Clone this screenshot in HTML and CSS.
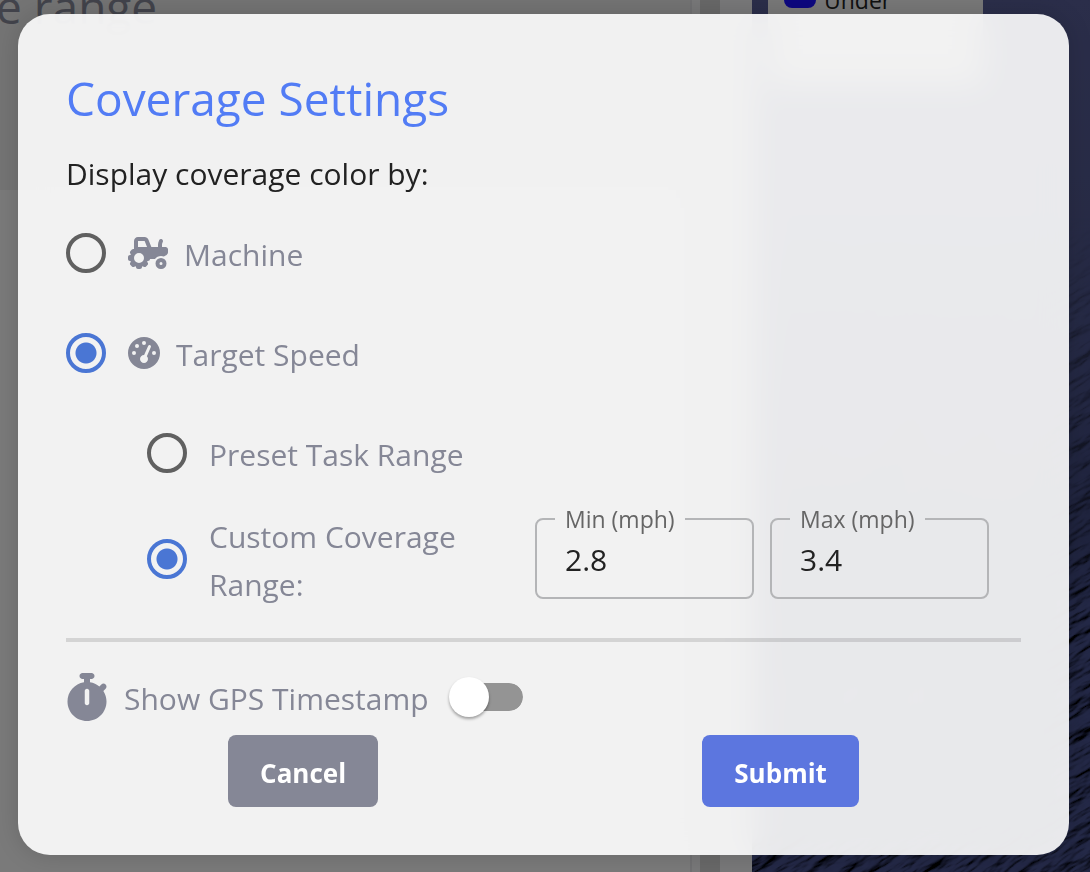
FILE: index.html
```
<!DOCTYPE html>
<html lang="en">
<head>
    <meta charset="UTF-8">
    <meta name="viewport" content="width=device-width, initial-scale=1.0">
    <title>Coverage Settings</title>
    <link rel="stylesheet" href="styles.css">
</head>
<body>
    <!-- Dashboard behind the dialog -->
    <div class="dashboard">
        <div class="panel">
            <div class="panel-card">e range</div>
        </div>
        <div class="scrollbar"></div>
        <div class="map">
            <svg class="terrain" viewBox="0 0 338 872" preserveAspectRatio="xMaxYMin slice" aria-hidden="true">
                <defs>
                    <filter id="ridges" x="0" y="0" width="100%" height="100%">
                        <feTurbulence type="fractalNoise" baseFrequency="0.02 0.08" numOctaves="4" seed="7"/>
                        <feDiffuseLighting surfaceScale="9" lighting-color="#4a5390">
                            <feDistantLight azimuth="250" elevation="50"/>
                        </feDiffuseLighting>
                    </filter>
                    <linearGradient id="fade" x1="0" y1="0" x2="0" y2="1">
                        <stop offset="0.25" stop-color="#000"/>
                        <stop offset="0.4" stop-color="#555"/>
                        <stop offset="0.62" stop-color="#777"/>
                        <stop offset="0.7" stop-color="#fff"/>
                    </linearGradient>
                    <mask id="lower">
                        <rect width="338" height="872" fill="url(#fade)"/>
                    </mask>
                </defs>
                <g mask="url(#lower)">
                    <rect x="-500" y="-200" width="1400" height="1400" transform="rotate(-30 169 436)" filter="url(#ridges)"/>
                </g>
            </svg>
            <div class="map-legend"><span class="swatch"></span>Under</div>
        </div>
    </div>

    <!-- Dialog -->
    <div class="backdrop">
        <form class="dialog">
            <h1>Coverage Settings</h1>
            <p class="prompt">Display coverage color by:</p>

            <div class="option">
                <input type="radio" name="colorBy" id="machine">
                <label for="machine">
                    <svg class="icon" width="40" height="32" viewBox="0 0 640 512" aria-hidden="true"><path d="M96 64c0-35.300 28.700-64 64-64H266.300c26.200 0 49.700 15.900 59.400 40.200L373.700 160H480V126.200c0-24.800 5.800-49.300 16.900-71.600l2.500-5c7.900-15.800 27.100-22.200 42.900-14.300s22.200 27.100 14.300 42.900l-2.500 5c-6.700 13.300-10.100 28-10.100 42.900V160h56c22.100 0 40 17.900 40 40v45.400c0 16.500-8.500 31.900-22.600 40.700l-43.300 27.100c-14.200-5.900-29.800-9.200-46.100-9.200c-39.300 0-74.100 18.900-96 48H352c0 17.700-14.300 32-32 32h-8.200c-1.700 4.800-3.700 9.500-5.800 14.100l5.800 5.800c12.500 12.500 12.500 32.800 0 45.300l-22.600 22.600c-12.500 12.500-32.800 12.500-45.300 0l-5.800-5.800c-4.600 2.200-9.300 4.100-14.100 5.800V480c0 17.700-14.300 32-32 32H160c-17.700 0-32-14.300-32-32v-8.200c-4.800-1.700-9.500-3.700-14.100-5.800l-5.800 5.800c-12.500 12.500-32.800 12.500-45.300 0L40.200 449.100c-12.500-12.500-12.500-32.800 0-45.300l5.800-5.800c-2.200-4.600-4.100-9.300-5.800-14.100H32c-17.700 0-32-14.300-32-32V320c0-17.700 14.300-32 32-32h8.200c1.700-4.800 3.700-9.500 5.800-14.100l-5.800-5.800c-12.500-12.500-12.500-32.800 0-45.300l22.600-22.600c9-9 21.900-11.500 33.100-7.600V64zm170.300 0H160v96H304.700L266.300 64zM176 256a80 80 0 1 0 0 160 80 80 0 1 0 0-160zM528 448a24 24 0 1 1 0-48 24 24 0 1 1 0 48zm0 64a88 88 0 1 0 0-176 88 88 0 1 0 0 176z" fill-rule="evenodd"/></svg>
                    <span>Machine</span>
                </label>
            </div>

            <div class="option">
                <input type="radio" name="colorBy" id="speed" checked>
                <label for="speed">
                    <svg class="icon" width="32" height="32" viewBox="0 0 512 512" aria-hidden="true"><path d="M0 256a256 256 0 1 1 512 0A256 256 0 1 1 0 256zM288 96a32 32 0 1 0-64 0 32 32 0 1 0 64 0zM256 416c35.300 0 64-28.700 64-64c0-17.400-6.900-33.100-18.100-44.600L366 161.700c5.300-12.100-.2-26.300-12.300-31.600s-26.300 .2-31.600 12.300L257.900 288c-.6 0-1.300 0-1.900 0c-35.300 0-64 28.700-64 64s28.700 64 64 64zM176 144a32 32 0 1 0-64 0 32 32 0 1 0 64 0zM96 288a32 32 0 1 0 0-64 32 32 0 1 0 0 64zm352-32a32 32 0 1 0-64 0 32 32 0 1 0 64 0z" fill-rule="evenodd"/></svg>
                    <span>Target Speed</span>
                </label>
            </div>

            <div class="option nested">
                <input type="radio" name="range" id="preset">
                <label for="preset"><span>Preset Task Range</span></label>
            </div>

            <div class="option nested custom">
                <input type="radio" name="range" id="custom" checked>
                <label for="custom"><span>Custom Coverage Range:</span></label>
                <div class="fields">
                    <fieldset>
                        <legend><label for="min">Min (mph)</label></legend>
                        <input type="text" id="min" value="2.8">
                    </fieldset>
                    <fieldset>
                        <legend><label for="max">Max (mph)</label></legend>
                        <input type="text" id="max" value="3.4">
                    </fieldset>
                </div>
            </div>

            <hr>

            <div class="timestamp">
                <label for="gps">
                    <svg class="icon" width="42" height="48" viewBox="0 0 448 512" aria-hidden="true"><path d="M176 0c-17.700 0-32 14.300-32 32s14.300 32 32 32h16v34.400C92.300 113.800 16 200 16 304c0 114.900 93.100 208 208 208s208-93.100 208-208c0-41.800-12.300-80.700-33.500-113.200l24.100-24.100c12.500-12.500 12.500-32.800 0-45.300s-32.800-12.500-45.300 0L355.700 143c-28.100-23-62.200-38.800-99.700-44.600V64h16c17.700 0 32-14.300 32-32S289.700 0 272 0H176zm72 192V320c0 13.300-10.700 24-24 24s-24-10.700-24-24V192c0-13.300 10.700-24 24-24s24 10.700 24 24z" fill-rule="evenodd"/></svg>
                    <span>Show GPS Timestamp</span>
                </label>
                <input type="checkbox" class="switch" id="gps">
            </div>

            <div class="actions">
                <button type="button" class="cancel">Cancel</button>
                <button type="submit" class="submit">Submit</button>
            </div>
        </form>
    </div>
</body>
</html>
```
FILE: styles.css
```
/* Global Styles */
* {
    box-sizing: border-box;
}

body {
    font-family: "Segoe UI", "Open Sans", sans-serif;
    font-size: 30px;
    line-height: 48px;
    color: #858796;
    margin: 0;
    height: 100vh;
    overflow: hidden;
}

/* Dashboard */
.dashboard {
    display: flex;
    height: 100vh;
    background: #f4f4f4;
}

.panel {
    flex: 1;
    border-right: 2px solid #e0e0e4;
}

.panel-card {
    height: 190px;
    background: #e8e8e8;
    font-size: 46px;
    line-height: 12px;
    text-indent: -4px;
    white-space: nowrap;
}

.scrollbar {
    width: 60px;
    border-left: 8px solid #f0f0f2;
    border-right: 32px solid #f0f0f2;
    background: #d0d0d0;
}

.map {
    width: 338px;
    position: relative;
    background: linear-gradient(#565c94, #4c5488 40%, #363e6c 65%, #2a3160);
}

.terrain {
    display: block;
    width: 100%;
    height: 100%;
}

.map-legend {
    position: absolute;
    top: 0;
    left: 16px;
    width: 215px;
    height: 85px;
    padding-left: 16px;
    display: flex;
    gap: 8px;
    background: #f0f0f0;
    color: #222;
    font-size: 23px;
    line-height: 0;
}

.swatch {
    width: 32px;
    height: 8px;
    border-radius: 0 0 8px 8px;
    background: #1a10ff;
}

/* Dialog */
.backdrop {
    position: fixed;
    inset: 0;
    padding: 14px 21px 16px 18px;
    background: rgba(0, 0, 0, 0.5);
}

.dialog {
    padding: 48px;
    border-radius: 32px;
    background: rgba(255, 255, 255, 0.9);
    backdrop-filter: blur(16px);
    box-shadow: 0 0 24px rgba(0, 0, 0, 0.15);
}

h1 {
    margin: 0 0 16px;
    font-size: 46px;
    line-height: 72px;
    font-weight: 400;
    color: #527cf5;
}

.prompt {
    margin: 0 0 5px;
    color: #222;
}

/* Options */
.option {
    display: flex;
    align-items: center;
    gap: 22px;
    height: 100px;
}

.option > label,
.timestamp label {
    display: flex;
    align-items: center;
    gap: 16px;
}

.option span,
.timestamp span {
    padding-top: 3px;
}

.icon {
    flex: none;
    fill: #858796;
}

.nested {
    margin-left: 81px;
}

.custom {
    height: 112px;
    margin-right: 32px;
}

.custom > label {
    width: 304px;
}

input[type="radio"] {
    appearance: none;
    flex: none;
    width: 40px;
    height: 40px;
    margin: 0;
    border: 4px solid #606060;
    border-radius: 50%;
}

input[type="radio"]:checked {
    border-color: #4a76d4;
    background: radial-gradient(circle, #4a76d4 10px, transparent 11px);
}

/* Number fields */
.fields {
    flex: 1;
    display: flex;
    gap: 16px;
}

fieldset {
    flex: 1;
    min-width: 0;
    height: 92px;
    margin: 0 0 12px;
    padding: 5px 18px 0;
    border: 2px solid #b4b5b7;
    border-radius: 8px;
}

legend {
    padding: 0 10px;
    font-size: 23px;
    line-height: 24px;
    color: #666;
}

input[type="text"] {
    width: 100%;
    padding: 0 10px;
    border: none;
    outline: none;
    background: none;
    font: inherit;
    line-height: 48px;
    color: #222;
}

hr {
    height: 4px;
    margin: 23px 0 17px;
    border: none;
    background: rgba(0, 0, 0, 0.12);
}

/* Timestamp switch */
.timestamp {
    display: flex;
    align-items: center;
    gap: 20px;
    height: 76px;
}

.switch {
    appearance: none;
    position: relative;
    width: 74px;
    height: 28px;
    margin: 0;
    border-left: 6px solid transparent;
    border-radius: 14px;
    background: #949494;
    background-clip: padding-box;
}

.switch::before {
    content: "";
    position: absolute;
    top: -6px;
    left: -6px;
    width: 40px;
    height: 40px;
    border-radius: 50%;
    background: #fff;
    box-shadow: 0 2px 3px rgba(0, 0, 0, 0.35);
}

.switch:checked::before {
    left: 28px;
}

/* Buttons */
.actions {
    display: flex;
    justify-content: space-around;
}

button {
    height: 72px;
    padding: 3px 32px 0;
    border: none;
    border-radius: 8px;
    font-family: inherit;
    font-size: 26px;
    font-weight: 700;
    color: #fff;
}

.cancel {
    background: #858796;
}

.submit {
    background: #5c76df;
}
```
